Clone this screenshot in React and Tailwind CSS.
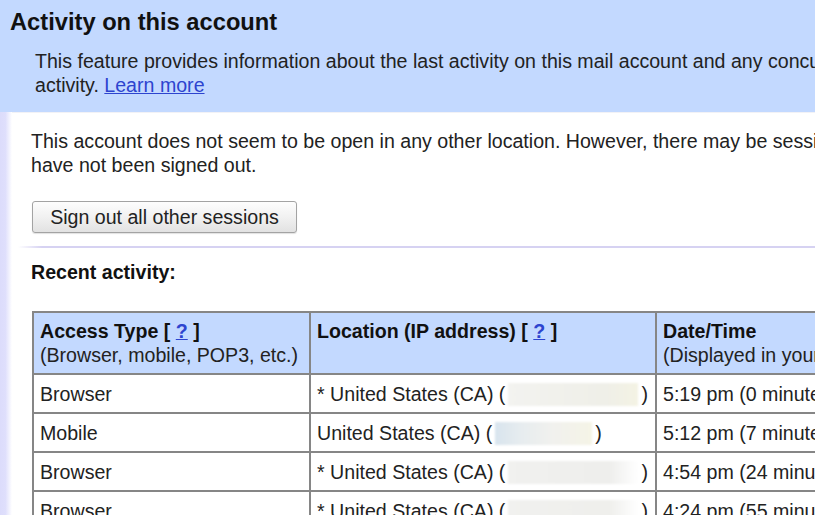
import React from 'react';

const rows = [
  { type: 'Browser', star: true, box: 'w-[130px] bg-[linear-gradient(to_right,#f3f3f0,#efefe8_75%,#f4f3e4)]', time: '5:19 pm (0 minutes ago)' },
  { type: 'Mobile', star: false, box: 'w-[97px] bg-[linear-gradient(to_right,#d8e4ee,#e6ecef_25%,#f1f1ee_60%,#f5f4e6)]', time: '5:12 pm (7 minutes ago)' },
  { type: 'Browser', star: true, box: 'w-[130px] bg-[linear-gradient(to_right,#f1f1ef,#eeeeec_78%,#ffffff)]', time: '4:54 pm (24 minutes ago)' },
  { type: 'Browser', star: true, box: 'w-[130px] bg-[linear-gradient(to_right,#f1f1ef,#efefec_78%,#ffffff)]', time: '4:24 pm (55 minutes ago)' },
];

const HelpLink = () => (
  <>
    [ <a href="#" className="text-[#2d44cf] underline">?</a> ]
  </>
);

export default function App() {
  return (
    <div className="w-[815px] h-[515px] overflow-hidden bg-white text-[#222] font-['Liberation_Sans',Arial,sans-serif]">
      <div className="w-[1200px]">
        {/* Blue header */}
        <div className="bg-[#c3d9ff] h-[112px] pt-[8px] pl-[10px]">
          <h1 className="text-[23.7px] leading-[28px] font-bold text-[#111]">Activity on this account</h1>
          <p className="mt-[14px] ml-[25px] text-[19.6px] leading-[23.5px] whitespace-nowrap">
            This feature provides information about the last activity on this mail account and any concurrent
            <br />
            activity. <a href="#" className="text-[#2d44cf] underline">Learn more</a>
          </p>
        </div>

        <div className="flex">
          <div className="w-[12px] shrink-0 bg-[linear-gradient(to_right,#dcdcfb,#dfdffc_45%,#ffffff)]" />
          <div className="flex-1 pt-[16px] border-t border-[#f2f2f6]">
            <p className="ml-[19px] text-[19.6px] leading-[24px] whitespace-nowrap">
              This account does not seem to be open in any other location. However, there may be sessions that
              <br />
              have not been signed out.
            </p>

            <button className="block mt-[24px] ml-[20px] w-[265px] h-[32px] rounded-[3px] border border-[#a3a3a3] bg-[linear-gradient(to_bottom,#fdfdfd,#f1f1f1_50%,#e2e2e2)] text-[19.6px] leading-[24px] text-[#222] shadow-[0_1px_1px_rgba(0,0,0,0.12)]">
              Sign out all other sessions
            </button>

            <div className="mt-[13px] ml-[6px] h-[2px] bg-[linear-gradient(to_right,rgba(214,210,242,0),#d6d2f2_24px)]" />

            <h2 className="mt-[12px] ml-[19px] text-[19.6px] leading-[24px] font-bold text-[#111]">Recent activity:</h2>

            <table className="mt-[27px] ml-[20px] w-[1125px] table-fixed border-separate border-spacing-0 border-l-2 border-t-2 border-[#868686] text-[19.6px] leading-[24px]">
              <thead>
                <tr className="bg-[#c3d9ff] text-left align-top">
                  <th className="w-[277px] px-[6px] pt-[6px] pb-[6px] border-r-2 border-b-2 border-[#868686] font-normal">
                    <div className="font-bold text-[#111]">Access Type <HelpLink /></div>
                    <div className="whitespace-nowrap">(Browser, mobile, POP3, etc.)</div>
                  </th>
                  <th className="w-[346px] px-[6px] pt-[6px] pb-[6px] border-r-2 border-b-2 border-[#868686] font-normal">
                    <div className="font-bold text-[#111]">Location (IP address) <HelpLink /></div>
                  </th>
                  <th className="w-[500px] px-[6px] pt-[6px] pb-[6px] border-r-2 border-b-2 border-[#868686] font-normal">
                    <div className="font-bold text-[#111]">Date/Time</div>
                    <div className="whitespace-nowrap">(Displayed in your time zone)</div>
                  </th>
                </tr>
              </thead>
              <tbody>
                {rows.map((r, i) => (
                  <tr key={i}>
                    <td className="px-[6px] pt-[7px] pb-[6px] border-r-2 border-b-2 border-[#868686]">{r.type}</td>
                    <td className="px-[6px] pt-[7px] pb-[6px] border-r-2 border-b-2 border-[#868686] whitespace-nowrap">
                      {r.star ? '* ' : ''}United States (CA) (
                      <span className={`inline-block align-[-5px] h-[23px] mx-[3px] blur-[1px] ${r.box}`} />
                      )
                    </td>
                    <td className="px-[6px] pt-[7px] pb-[6px] border-r-2 border-b-2 border-[#868686] whitespace-nowrap">{r.time}</td>
                  </tr>
                ))}
              </tbody>
            </table>
          </div>
        </div>
      </div>
    </div>
  );
}
